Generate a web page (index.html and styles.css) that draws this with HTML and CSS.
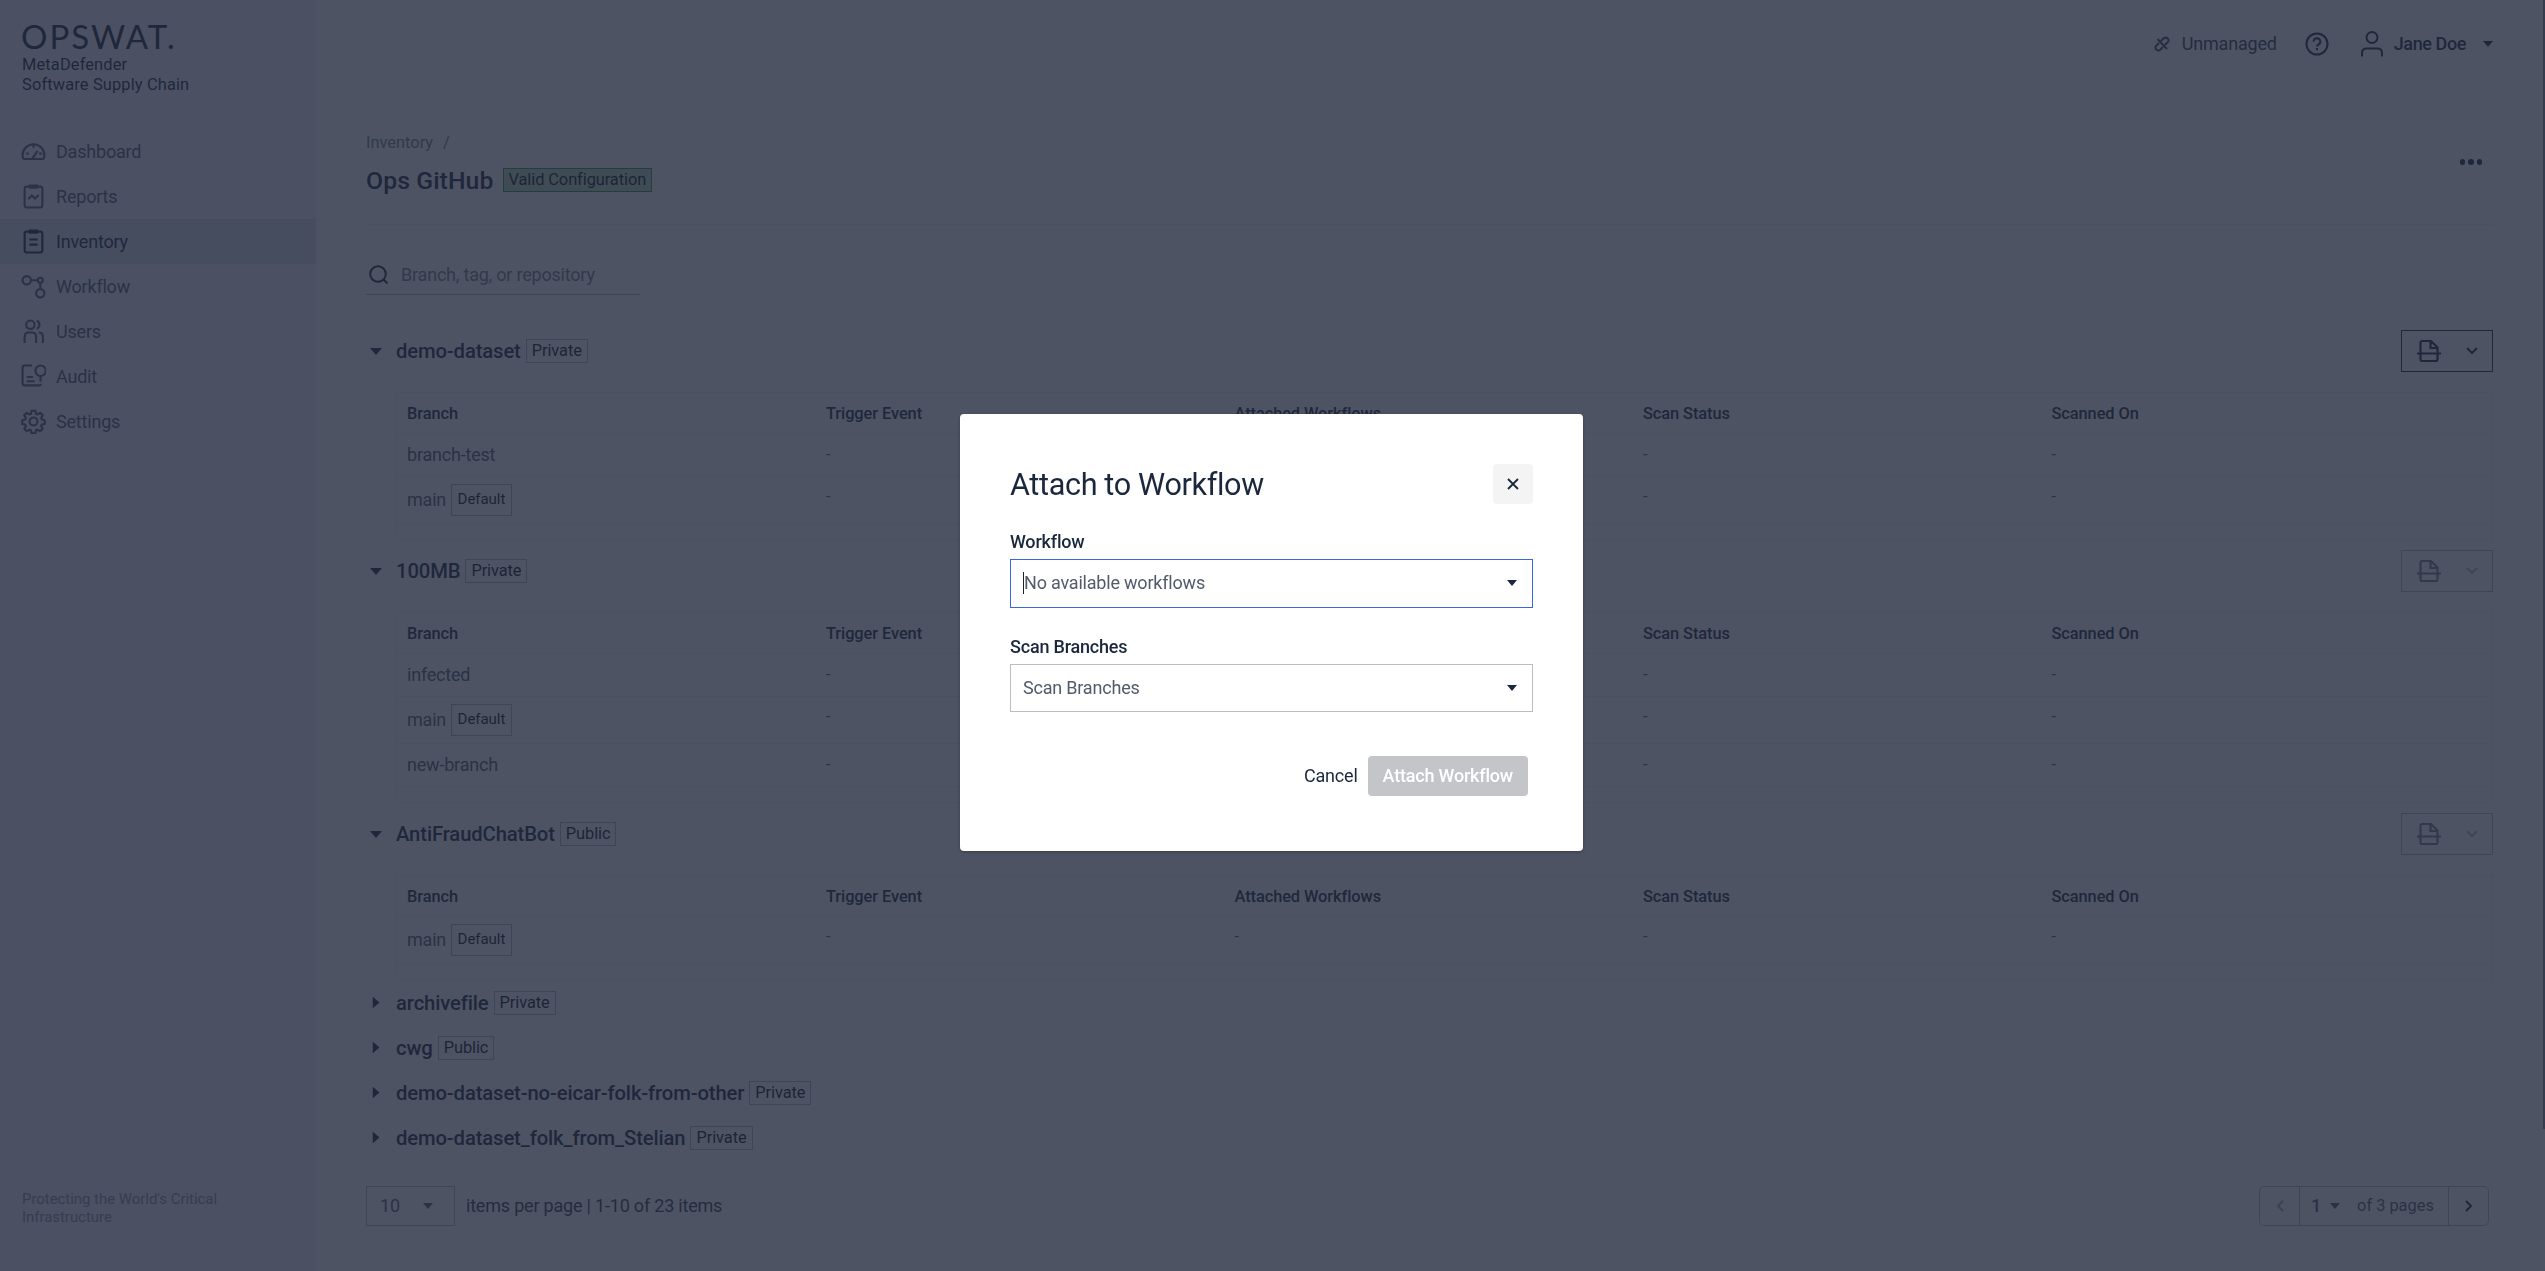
FILE: index.html
```html
<!DOCTYPE html>
<html lang="en">
<head>
    <meta charset="UTF-8">
    <meta name="viewport" content="width=device-width, initial-scale=1.0">
    <title>MetaDefender Software Supply Chain - Inventory</title>
    <link rel="stylesheet" href="styles.css">
</head>
<body>
    <!-- Shared icons -->
    <svg class="sprite">
        <symbol id="caret" viewBox="0 0 12 7"><path d="M0 0h12L6 7z" fill="currentColor"/></symbol>
        <symbol id="scan" viewBox="0 0 24 24">
            <path d="M3.500 14V3.800q0-1.800 1.800-1.800H14l6.500 6.500V14M3.500 14v6.200q0 1.800 1.800 1.800h13.400q1.800 0 1.800-1.800V14M13.500 2.500V9h6.500M0 14.500h24" fill="none" stroke="currentColor" stroke-width="2.200"/>
        </symbol>
        <symbol id="chevron" viewBox="0 0 12 8"><path d="M1 1l5 5 5-5" fill="none" stroke="currentColor" stroke-width="2"/></symbol>
    </svg>

    <div class="layout">
        <aside class="sidebar">
            <div class="brand">
                <div class="logo">OPSWAT.</div>
                <div class="product">MetaDefender<br>Software Supply Chain</div>
            </div>
            <nav class="nav">
                <a class="nav-item">
                    <svg viewBox="0 0 24 24"><path d="M3.200 19.200Q1.500 18.800 1.500 15.500a10.500 10.500 0 0 1 21 0q0 3.300-1.700 3.700zM11 18.500l5-7M12 5.500v3M5 14h2.500M17.500 14H20"/></svg>
                    Dashboard
                </a>
                <a class="nav-item">
                    <svg viewBox="0 0 24 24"><rect x="3.500" y="2.500" width="17" height="20" rx="2"/><path d="M7.500 2.500h9" stroke-width="4"/><path d="M7 14.500l3.500-3.500 3 3 3.500-3.500"/></svg>
                    Reports
                </a>
                <a class="nav-item active">
                    <svg viewBox="0 0 24 24"><rect x="3.500" y="2.500" width="17" height="20" rx="2"/><path d="M7.500 2.500h9" stroke-width="4"/><path d="M8 10h8M8 15h8"/></svg>
                    Inventory
                </a>
                <a class="nav-item">
                    <svg viewBox="0 0 24 24"><circle cx="5.500" cy="6" r="4"/><circle cx="18.500" cy="6" r="2.400"/><circle cx="18.500" cy="18.500" r="4"/><path d="M9.500 6h6.500M18.500 8.500v6"/></svg>
                    Workflow
                </a>
                <a class="nav-item">
                    <svg viewBox="0 0 24 24"><circle cx="9" cy="5.500" r="4"/><path d="M3.500 23v-6q0-4 4-4h3q4 0 4 4v6M15 1.700a4 4 0 0 1 0 7.600M17 13q4 0 4 4v6"/></svg>
                    Users
                </a>
                <a class="nav-item">
                    <svg viewBox="0 0 24 24"><circle cx="18.800" cy="6.500" r="5"/><path d="M18.800 11.500V17M10.500 1.500h-7q-2 0-2 2v15q0 2 2 2h14q1.500 0 1.500-1.500M5.500 12.500h6M5.500 16.500h7.500"/></svg>
                    Audit
                </a>
                <a class="nav-item">
                    <svg viewBox="0 0 24 24"><circle cx="12" cy="12" r="3.800"/><path d="M10.200 1.700h3.600l.6 2.900 1.500.6 2.500-1.600 2.500 2.500-1.600 2.500.6 1.500 2.900.6v3.600l-2.900.6-.6 1.500 1.600 2.500-2.500 2.500-2.500-1.600-1.500.6-.6 2.900h-3.600l-.6-2.900-1.500-.6-2.500 1.600-2.500-2.500 1.600-2.500-.6-1.500-2.900-.6v-3.600l2.900-.6.6-1.500-1.600-2.500 2.500-2.500 2.500 1.600 1.500-.6z" stroke-linejoin="round"/></svg>
                    Settings
                </a>
            </nav>
            <div class="slogan">Protecting the World's Critical Infrastructure</div>
        </aside>

        <main class="main">
            <header class="topbar">
                <span class="mode">
                    <svg viewBox="0 0 16 16"><path d="M5 7L2 10a2.900 2.900 0 0 0 4 4l3-3M7 5l3-3a2.900 2.900 0 0 1 4 4l-3 3M3.500 3l9.500 10"/></svg>
                    Unmanaged
                </span>
                <svg class="help" viewBox="0 0 24 24"><circle cx="12" cy="12" r="10.500"/><path d="M8.700 9.600a3.300 3.300 0 1 1 4.800 2.900q-1.500.7-1.500 2"/><path d="M12 16v2.200"/></svg>
                <span class="user">
                    <svg viewBox="0 0 22 26"><circle cx="11" cy="6.500" r="5.500"/><path d="M1 25.500V22q0-4.500 4.500-4.500h11q4.500 0 4.500 4.500v3.500"/></svg>
                    Jane Doe
                    <svg class="caret"><use href="#caret"/></svg>
                </span>
            </header>

            <div class="page-head">
                <div>
                    <div class="breadcrumb"><span>Inventory</span><span>/</span></div>
                    <div class="title-row">
                        <h1>Ops GitHub</h1>
                        <span class="tag valid">Valid Configuration</span>
                    </div>
                </div>
                <div class="more"><i></i><i></i><i></i></div>
            </div>

            <div class="search">
                <svg viewBox="0 0 20 20"><circle cx="9" cy="9" r="7.800"/><path d="M14.500 14.500l4 4"/></svg>
                <span>Branch, tag, or repository</span>
            </div>

            <section class="group">
                <div class="group-head">
                    <svg class="toggle"><use href="#caret"/></svg>
                    <h2>demo-dataset</h2><span class="tag">Private</span>
                    <div class="scan-btn"><svg class="scan"><use href="#scan"/></svg><svg class="chev"><use href="#chevron"/></svg></div>
                </div>
                <div class="table">
                    <div class="row head"><span>Branch</span><span>Trigger Event</span><span>Attached Workflows</span><span>Scan Status</span><span>Scanned On</span></div>
                    <div class="row"><span>branch-test</span><b>-</b><b>-</b><b>-</b><b>-</b></div>
                    <div class="row tall"><span>main<em>Default</em></span><b>-</b><b>-</b><b>-</b><b>-</b></div>
                    <div class="table-foot"></div>
                </div>
            </section>

            <section class="group">
                <div class="group-head">
                    <svg class="toggle"><use href="#caret"/></svg>
                    <h2>100MB</h2><span class="tag">Private</span>
                    <div class="scan-btn disabled"><svg class="scan"><use href="#scan"/></svg><svg class="chev"><use href="#chevron"/></svg></div>
                </div>
                <div class="table">
                    <div class="row head"><span>Branch</span><span>Trigger Event</span><span>Attached Workflows</span><span>Scan Status</span><span>Scanned On</span></div>
                    <div class="row"><span>infected</span><b>-</b><b>-</b><b>-</b><b>-</b></div>
                    <div class="row tall"><span>main<em>Default</em></span><b>-</b><b>-</b><b>-</b><b>-</b></div>
                    <div class="row"><span>new-branch</span><b>-</b><b>-</b><b>-</b><b>-</b></div>
                    <div class="table-foot"></div>
                </div>
            </section>

            <section class="group">
                <div class="group-head">
                    <svg class="toggle"><use href="#caret"/></svg>
                    <h2>AntiFraudChatBot</h2><span class="tag">Public</span>
                    <div class="scan-btn disabled"><svg class="scan"><use href="#scan"/></svg><svg class="chev"><use href="#chevron"/></svg></div>
                </div>
                <div class="table">
                    <div class="row head"><span>Branch</span><span>Trigger Event</span><span>Attached Workflows</span><span>Scan Status</span><span>Scanned On</span></div>
                    <div class="row tall"><span>main<em>Default</em></span><b>-</b><b>-</b><b>-</b><b>-</b></div>
                    <div class="table-foot"></div>
                </div>
            </section>

            <div class="group-head closed"><svg class="toggle"><use href="#caret"/></svg><h2>archivefile</h2><span class="tag">Private</span></div>
            <div class="group-head closed"><svg class="toggle"><use href="#caret"/></svg><h2>cwg</h2><span class="tag">Public</span></div>
            <div class="group-head closed"><svg class="toggle"><use href="#caret"/></svg><h2>demo-dataset-no-eicar-folk-from-other</h2><span class="tag">Private</span></div>
            <div class="group-head closed"><svg class="toggle"><use href="#caret"/></svg><h2>demo-dataset_folk_from_Stelian</h2><span class="tag">Private</span></div>

            <footer class="pager">
                <div class="page-size">10<svg class="caret"><use href="#caret"/></svg></div>
                <span class="page-info">items per page | 1-10 of 23 items</span>
                <div class="page-nav">
                    <div class="prev"><svg viewBox="0 0 8 12"><path d="M7 1L2 6l5 5"/></svg></div>
                    <div class="current"><strong>1</strong><svg class="caret"><use href="#caret"/></svg><span>of 3 pages</span></div>
                    <div class="next"><svg viewBox="0 0 8 12"><path d="M1 1l5 5-5 5"/></svg></div>
                </div>
            </footer>
        </main>
    </div>
    <div class="scroll-thumb"></div>

    <div class="overlay">
        <div class="modal">
            <div class="modal-head">
                <div class="modal-title">Attach to Workflow</div>
                <div class="close"><svg viewBox="0 0 12 12"><path d="M1 1l10 10M11 1L1 11"/></svg></div>
            </div>
            <div class="label">Workflow</div>
            <div class="select focused"><span>No available workflows</span><svg class="caret"><use href="#caret"/></svg></div>
            <div class="label">Scan Branches</div>
            <div class="select"><span>Scan Branches</span><svg class="caret"><use href="#caret"/></svg></div>
            <div class="actions">
                <span class="cancel">Cancel</span>
                <span class="submit">Attach Workflow</span>
            </div>
        </div>
    </div>
</body>
</html>
```
FILE: styles.css
```css
* {
    box-sizing: border-box;
}
body {
    margin: 0;
    height: 1271px;
    overflow: hidden;
    background: #fff;
    color: #1b273c;
    font-family: Roboto, "Liberation Sans", sans-serif;
    font-size: 18px;
    line-height: 22px;
    letter-spacing: -0.2px;
}
svg {
    display: block;
    flex: none;
    fill: none;
    stroke: currentColor;
    stroke-width: 2;
}
use {
    stroke: none;
}
.sprite {
    position: absolute;
    width: 0;
    height: 0;
}
.caret {
    width: 10px;
    height: 6px;
}
.layout {
    display: flex;
    height: 1271px;
}

/* Sidebar */
.sidebar {
    width: 316px;
    flex: none;
    display: flex;
    flex-direction: column;
    background: #f3f4fa;
}
.brand {
    height: 129px;
    padding: 19px 21px 0;
}
.logo {
    height: 36px;
    font-family: Lato, sans-serif;
    font-size: 33px;
    line-height: 34px;
    letter-spacing: 2px;
    white-space: nowrap;
}
.product {
    padding-left: 1px;
    font-size: 16.4px;
    line-height: 20px;
    letter-spacing: 0.15px;
    white-space: nowrap;
}
.nav-item {
    display: flex;
    align-items: center;
    gap: 10px;
    height: 45px;
    padding-left: 21px;
    color: #525a6b;
}
.nav-item svg {
    width: 25px;
    height: 25px;
}
.nav-item.active {
    background: #d9e2ec;
    color: #1b273c;
}
.slogan {
    margin-top: auto;
    padding: 0 90px 45px 22px;
    color: #8a90a0;
    font-size: 14.9px;
    line-height: 18px;
    letter-spacing: 0;
}

/* Main column */
.main {
    flex: 1;
    padding: 0 52px 0 50px;
}
.topbar {
    height: 88px;
    display: flex;
    justify-content: flex-end;
    align-items: center;
}
.mode {
    display: flex;
    align-items: center;
    gap: 12px;
    color: #333d50;
}
.mode svg {
    width: 16px;
    height: 16px;
    stroke-width: 1.9;
}
.help {
    width: 24px;
    height: 24px;
    margin: 0 32px 0 28px;
}
.user {
    display: flex;
    align-items: center;
    font-weight: 500;
    letter-spacing: -0.4px;
}
.user svg:first-child {
    width: 22px;
    height: 26px;
    margin-right: 11px;
}
.user .caret {
    margin-left: 17px;
}
.page-head {
    display: flex;
    justify-content: space-between;
    height: 137px;
    padding-top: 44px;
    border-bottom: 1px solid #eeeff2;
}
.breadcrumb {
    display: flex;
    gap: 10px;
    color: #767d8a;
    font-size: 16.4px;
    letter-spacing: 0;
}
.title-row {
    display: flex;
    align-items: center;
    gap: 9px;
    margin-top: 13px;
}
h1 {
    margin: 0;
    font-size: 24.75px;
    line-height: 28px;
    font-weight: 500;
    letter-spacing: 0.1px;
}
.tag {
    height: 24px;
    padding: 0 5px;
    border: 1px solid #b6bac4;
    color: #0c1322;
    font-size: 16.4px;
    line-height: 22px;
    letter-spacing: -0.08px;
}
.tag.valid {
    margin-top: -2px;
    background: #bfdcba;
    border-color: #2c9a3c;
}
.more {
    display: flex;
    gap: 3px;
    padding: 27px 11px 0 0;
}
.more i {
    width: 5.5px;
    height: 5.5px;
    border-radius: 50%;
    background: #1b273c;
}
.search {
    display: flex;
    align-items: center;
    gap: 12px;
    width: 274px;
    height: 39px;
    margin: 31px 0 35px;
    padding-left: 3px;
    border-bottom: 1px solid #b6bac4;
}
.search svg {
    width: 20px;
    height: 20px;
}
.search span {
    color: #767d8a;
    white-space: nowrap;
}

/* Repository groups */
.group {
    margin-bottom: 10px;
}
.group-head {
    display: flex;
    align-items: center;
    height: 42px;
    margin-bottom: 20px;
}
.toggle {
    width: 12px;
    height: 7px;
    margin: 0 14px 0 4px;
}
h2 {
    margin: 0 5px 0 0;
    font-size: 20.25px;
    font-weight: 500;
    letter-spacing: -0.13px;
}
.group-head.closed {
    height: 45px;
    margin: 0;
}
.group:last-of-type {
    margin-bottom: 0;
}
.closed .toggle {
    transform: rotate(-90deg);
}
.scan-btn {
    display: flex;
    align-items: center;
    width: 92px;
    height: 42px;
    margin-left: auto;
    padding-left: 15px;
    border: 1px solid #1b273c;
}
.scan {
    width: 24px;
    height: 24px;
    margin-right: 25px;
}
.chev {
    width: 12px;
    height: 8px;
}
.scan-btn.disabled {
    border-color: #b6bac4;
    color: #767d8a;
}
.disabled .chev {
    color: #b6bac4;
}
.table {
    margin-left: 30px;
    border: 1px solid #eeeff2;
}
.row {
    display: grid;
    grid-template-columns: 419px repeat(3, 408.5px) 1fr;
    height: 43px;
    padding-left: 10px;
    border-bottom: 1px solid #eeeff2;
    color: #525a6b;
    line-height: 42px;
}
.row.head {
    height: 41px;
    color: #1b273c;
    font-size: 16.4px;
    font-weight: 500;
    line-height: 42px;
    letter-spacing: -0.08px;
}
.row b {
    font-size: 16.4px;
    font-weight: 400;
}
.row.tall {
    height: 47px;
    line-height: 46px;
}
.row.tall b {
    line-height: 40px;
}
.row.tall span {
    display: flex;
    align-items: center;
    gap: 5px;
}
.row em {
    height: 32px;
    padding: 0 5.5px;
    border: 1px solid #b6bac4;
    color: #0c1322;
    font-size: 15px;
    font-style: normal;
    line-height: 29px;
    letter-spacing: -0.05px;
}
.table-foot {
    height: 15px;
}

/* Pagination */
.pager {
    display: flex;
    align-items: center;
    height: 40px;
    margin-top: 26px;
    padding-right: 4px;
}
.page-size {
    display: flex;
    align-items: center;
    justify-content: space-between;
    width: 89px;
    height: 40px;
    padding: 0 21px 0 13px;
    border: 1px solid #b6bac4;
    color: #525a6b;
}
.page-info {
    margin-left: 11px;
    color: #333d50;
}
.page-nav {
    display: flex;
    width: 230px;
    height: 40px;
    margin-left: auto;
    border: 1px solid #b6bac4;
    border-radius: 5px;
}
.page-nav > div {
    display: flex;
    align-items: center;
    justify-content: center;
    width: 39px;
}
.page-nav > .current {
    flex: 1;
    justify-content: flex-start;
    padding-left: 11px;
    border: solid #b6bac4;
    border-width: 0 1px;
    color: #525a6b;
    font-size: 16.4px;
}
.current strong {
    margin-right: 9px;
    font-size: 18px;
    font-weight: 500;
}
.current span {
    margin-left: 17px;
    letter-spacing: 0;
}
.prev svg,
.next svg {
    width: 8px;
    height: 12px;
}
.prev {
    color: #a2a7b4;
}
.scroll-thumb {
    position: absolute;
    top: 0;
    right: 0;
    width: 2px;
    height: 1129px;
    background: #868b94;
}

/* Modal */
.overlay {
    position: fixed;
    inset: 0;
    display: flex;
    justify-content: center;
    align-items: center;
    padding: 0 2px 6px 0;
    background: rgba(32, 40, 60, 0.8);
}
.modal {
    width: 623px;
    height: 437px;
    padding: 50px;
    border-radius: 4px;
    background: #fff;
    box-shadow: 0 1px 3px rgba(0, 0, 0, 0.3);
}
.modal-head {
    display: flex;
    justify-content: space-between;
    align-items: center;
    height: 40px;
    margin-bottom: 27px;
}
.modal-title {
    padding-top: 2px;
    font-size: 30.6px;
    line-height: 36px;
    letter-spacing: -0.35px;
}
.close {
    display: flex;
    align-items: center;
    justify-content: center;
    width: 40px;
    height: 40px;
    border-radius: 4px;
    background: #f4f4f4;
}
.close svg {
    width: 12px;
    height: 12px;
    stroke-width: 1.8;
}
.label {
    margin-bottom: 6px;
    font-weight: 500;
}
.select {
    display: flex;
    align-items: center;
    justify-content: space-between;
    height: 48px;
    margin-bottom: 28px;
    padding: 0 15px 1px 12px;
    border: 1px solid #bdbdbd;
    color: #525a6b;
}
.select .caret {
    color: #1b273c;
}
.select.focused {
    height: 49px;
    border-color: #3a67e0;
}
.focused span {
    border-left: 1px solid #222;
}
.actions {
    display: flex;
    justify-content: flex-end;
    align-items: center;
    gap: 10px;
    margin-top: 44px;
    padding-right: 5px;
}
.submit {
    height: 40px;
    padding: 0 15px;
    border-radius: 4px;
    background: #c4c5c9;
    color: #fff;
    font-weight: 500;
    line-height: 40px;
}
```
